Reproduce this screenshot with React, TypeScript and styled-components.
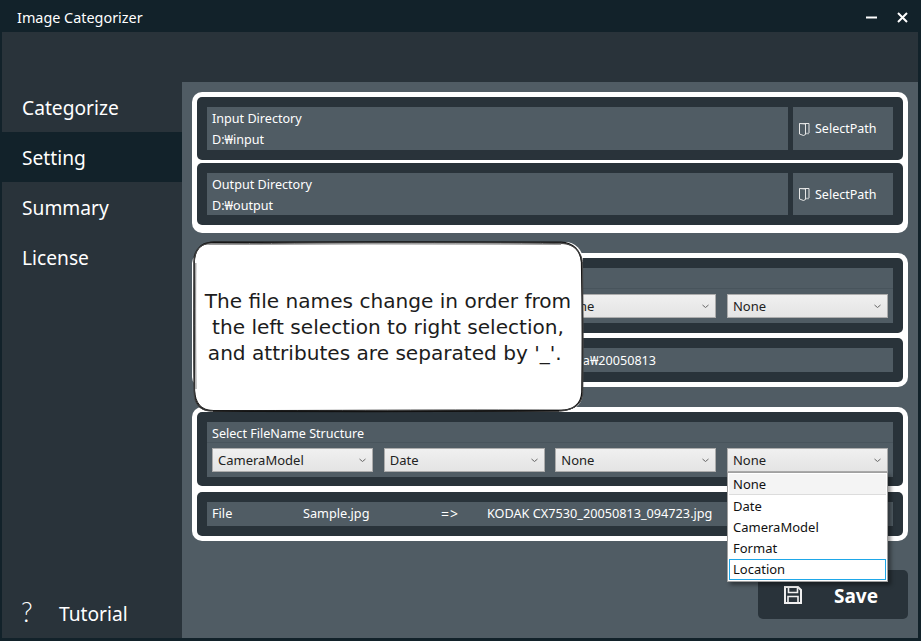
import styled, { createGlobalStyle } from 'styled-components';

const dark = '#12222a';
const card = '#29333a';
const panel = '#505c64';
const uiFont = '"Noto Sans", "Open Sans", sans-serif';

const GlobalStyle = createGlobalStyle`
  html, body {
    margin: 0;
    padding: 0;
    background: ${dark};
  }
  * {
    box-sizing: border-box;
  }
`;

const Window = styled.div`
  position: relative;
  display: flex;
  flex-direction: column;
  width: 921px;
  height: 641px;
  overflow: hidden;
  background: ${dark};
  color: #fff;
  font-family: ${uiFont};
`;

const TitleBar = styled.div`
  display: flex;
  align-items: center;
  justify-content: space-between;
  height: 32px;
  flex: none;
  padding: 0 13px 0 17px;
`;

const Title = styled.div`
  font-size: 14.4px;
  line-height: 18px;
  margin-top: 3px;
`;

const WindowButtons = styled.div`
  display: flex;
  align-items: center;
  gap: 20px;
  margin-top: 2px;
`;

const Body = styled.div`
  display: flex;
  flex: 1;
  margin: 0 3px 3px 2px;
  min-height: 0;
  background: ${card};
`;

const Sidebar = styled.nav`
  display: flex;
  flex-direction: column;
  width: 180px;
  flex: none;
  padding-top: 50px;
`;

const NavItem = styled.div<{ $active?: boolean }>`
  display: flex;
  align-items: center;
  height: 50px;
  padding-left: 20px;
  font-size: 19.2px;
  background: ${(p) => (p.$active ? dark : 'transparent')};
`;

const TutorialItem = styled.div`
  display: flex;
  align-items: center;
  height: 50px;
  margin-top: auto;
  padding-left: 19px;
  font-size: 19.2px;
`;

const Question = styled.span`
  width: 38px;
  font-family: Lato, sans-serif;
  font-weight: 300;
  font-size: 27px;
  margin-top: -3px;
`;

const Main = styled.main`
  display: flex;
  flex-direction: column;
  flex: 1;
  min-width: 0;
  margin-top: 50px;
  padding: 10px 10px 19px;
  background: ${panel};
`;

const Group = styled.section<{ $gap: number; $bottom: number }>`
  display: flex;
  flex-direction: column;
  gap: ${(p) => p.$gap}px;
  margin-bottom: 20px;
  padding: 5px 5px ${(p) => p.$bottom}px;
  background: #fff;
  border-radius: 10px;
`;

const Card = styled.div<{ $bottom?: number }>`
  display: flex;
  gap: 5px;
  padding: 10px 10px ${(p) => p.$bottom ?? 10}px;
  background: ${card};
  border-radius: 5px;
`;

const PathPanel = styled.div`
  display: flex;
  flex-direction: column;
  justify-content: space-between;
  flex: 1;
  height: 42.5px;
  padding: 3px 5px 0.5px;
  background: ${panel};
  font-size: 12.6px;
  line-height: 18px;
`;

const SelectButton = styled.button`
  display: flex;
  align-items: center;
  gap: 5px;
  width: 100px;
  height: 42.5px;
  padding: 0.6px 0 0 5px;
  border: none;
  background: ${panel};
  color: #fff;
  font-family: ${uiFont};
  font-size: 12.5px;
`;

const StructurePanel = styled.div`
  flex: 1;
  height: 55px;
  background: ${panel};
`;

const StructureLabel = styled.div`
  height: 21px;
  padding: 3px 5px 0;
  font-size: 12.6px;
  line-height: 18px;
  border-bottom: 1px solid #48545c;
`;

const ComboRow = styled.div`
  display: grid;
  grid-template-columns: repeat(4, 161px);
  gap: 10.67px;
  padding: 5px 5px 0;
`;

const Combo = styled.div`
  display: flex;
  align-items: center;
  justify-content: space-between;
  height: 24px;
  padding: 0 6px 0 5px;
  background: linear-gradient(#f0f0f0, #e4e4e4);
  border: 1px solid #acacac;
  color: #222;
  font-size: 13px;
`;

const ResultRow = styled.div`
  display: grid;
  grid-template-columns: 91px 138px 46px 1fr;
  align-items: center;
  flex: 1;
  height: 24px;
  padding: 0 5px 1px;
  background: ${panel};
  font-size: 12.7px;
  white-space: nowrap;
`;

const Arrow = styled.span`
  font-size: 14px;
  letter-spacing: 1px;
`;

const DirectoryRow = styled.div`
  display: flex;
  align-items: center;
  justify-content: flex-end;
  flex: 1;
  height: 24px;
  padding-right: 237px;
  background: ${panel};
  font-size: 12.6px;
  white-space: nowrap;
`;

const SaveButton = styled.button`
  display: flex;
  align-items: center;
  width: 150px;
  height: 49px;
  margin-top: auto;
  align-self: flex-end;
  padding: 0 0 0 25px;
  border: none;
  border-radius: 5px;
  background: ${card};
  color: #fff;
  font-family: ${uiFont};
  font-size: 19px;
  font-weight: 700;
`;

const SaveLabel = styled.span`
  margin-left: 31px;
  margin-top: 2px;
`;

const Hint = styled.div`
  position: absolute;
  left: 194px;
  top: 242px;
  display: flex;
  align-items: center;
  justify-content: center;
  width: 389px;
  height: 169px;
  background: #fff;
  border-radius: 18px;
  color: #1c1c1c;
  font-family: 'DejaVu Sans', sans-serif;
  font-size: 20.1px;
  line-height: 26px;
  text-align: center;
  white-space: nowrap;
`;

const HintBorder = styled.svg`
  position: absolute;
  left: -5px;
  top: -5px;
  width: 399px;
  height: 179px;
  pointer-events: none;
`;

const HintText = styled.div`
  position: relative;
  margin-top: 1px;
  margin-left: -1px;
`;

const DropList = styled.ul`
  position: absolute;
  left: 727px;
  top: 472px;
  width: 161px;
  margin: 0;
  padding: 1px;
  list-style: none;
  background: #fff;
  border: 1px solid #a0a0a0;
  box-shadow: 3px 3px 4px rgba(0, 0, 0, 0.4);
  color: #111;
  font-size: 13px;
`;

const DropItem = styled.li<{ $current?: boolean; $hover?: boolean }>`
  display: flex;
  align-items: center;
  height: 21.2px;
  padding-left: ${(p) => (p.$hover ? 3 : 4)}px;
  background: ${(p) => (p.$current ? '#f4f4f4' : '#fff')};
  border-bottom: ${(p) => (p.$current ? '1px solid #dcdcdc' : 'none')};
  border: ${(p) => (p.$hover ? '1px solid #1ea7e8' : undefined)};
`;

const MinimizeIcon = () => (
  <svg width="11" height="11" viewBox="0 0 11 11">
    <path d="M0 5.5h11" stroke="#fff" strokeWidth="2" />
  </svg>
);

const CloseIcon = () => (
  <svg width="11" height="11" viewBox="0 0 11 11">
    <path d="M1 1l9 9M10 1l-9 9" stroke="#fff" strokeWidth="2" />
  </svg>
);

const DoorIcon = () => (
  <svg width="12" height="14" viewBox="0 0 12 14" fill="none" stroke="#e6e6e6" strokeWidth="1">
    <path d="M1.5 1.5h9.500v9.500" />
    <path d="M8 11.500h3" stroke="#aab0b4" strokeWidth="1.500" />
    <path d="M1.500 1.500v10.500l4 1.500 2-1v-10.500z" fill={panel} />
  </svg>
);

const Chevron = () => (
  <svg width="7" height="5" viewBox="0 0 7 5" fill="none">
    <path d="M.5 1l3 2.500 3-2.500" stroke="#666" strokeWidth="1" />
  </svg>
);

const SaveIcon = () => (
  <svg width="20" height="20" viewBox="0 0 20 20" fill="none" stroke="#f0f0f0" strokeWidth="2">
    <path d="M2 2h13l3 3v13h-16z" />
    <path d="M5.500 2v5.500h9v-5.500M5 18v-6.500h10v6.500" strokeWidth="1.600" />
  </svg>
);

const SketchBorder = () => (
  <HintBorder viewBox="0 0 399 179" fill="none">
    <path d="M22 5.500C100 4.500 300 5 372 5.200c12 .5 20 8 20.500 20 .8 40 1 90 .3 130-.5 12-9 18-21 18.300-100 1-250 1-350 .2-11-.5-16-8-16.300-19-.6-45-.6-90-.2-130C5.500 13 12 6 22 5.500z" stroke="#111" strokeWidth="1.300" />
    <path d="M25 4.800c100 .6 250 .2 345 .7 14 1 22 7 23 24 1 40 .2 85 .5 125 0 12-7 19-24 18.800-100-.8-240 .4-345 .2-13 0-18-8-19-20-.8-40 .4-90-.5-130C4 12 15 5 25 4.800z" stroke="#222" strokeWidth="1" />
    <path d="M18 7c110-1 250-1.500 356-.4 11 .6 18 8 19.500 18 .4 45 1.200 90 .2 133-1 10-11 16-23 16.500-110 .8-240 .6-350 0-10-1-15-7-15.500-17-.8-45-.3-90 0-132C6 14 10 8 18 7z" stroke="#444" strokeWidth="1" />
    <path d="M20 7.500c110-.6 250-.8 352-.2M6.800 26c-.4 40-.2 90 .2 126" stroke="#999" strokeWidth="1.200" />
    <path d="M24 174c110 .8 240 .6 346-.3" stroke="#111" strokeWidth="1.500" />
  </HintBorder>
);

const StructureCombos = ({ values }: { values: string[] }) => (
  <ComboRow>
    {values.map((value, i) => (
      <Combo key={i}>
        <span>{value}</span>
        <Chevron />
      </Combo>
    ))}
  </ComboRow>
);

const PathCard = ({ label, value }: { label: string; value: string }) => (
  <Card>
    <PathPanel>
      <div>{label}</div>
      <div>{value}</div>
    </PathPanel>
    <SelectButton>
      <DoorIcon />
      SelectPath
    </SelectButton>
  </Card>
);

const App = () => {
  return (
    <Window>
      <GlobalStyle />
      <TitleBar>
        <Title>Image Categorizer</Title>
        <WindowButtons>
          <MinimizeIcon />
          <CloseIcon />
        </WindowButtons>
      </TitleBar>
      <Body>
        <Sidebar>
          <NavItem>Categorize</NavItem>
          <NavItem $active>Setting</NavItem>
          <NavItem>Summary</NavItem>
          <NavItem>License</NavItem>
          <TutorialItem>
            <Question>?</Question>
            Tutorial
          </TutorialItem>
        </Sidebar>
        <Main>
          <Group $gap={3.4} $bottom={8}>
            <PathCard label="Input Directory" value="D:₩input" />
            <PathCard label="Output Directory" value="D:₩output" />
          </Group>
          <Group $gap={5.400} $bottom={5}>
            <Card $bottom={9.300}>
              <StructurePanel>
                <StructureLabel />
                <StructureCombos values={['', '', 'None', 'None']} />
              </StructurePanel>
            </Card>
            <Card>
              <DirectoryRow>a₩20050813</DirectoryRow>
            </Card>
          </Group>
          <Group $gap={5.400} $bottom={5}>
            <Card $bottom={9.300}>
              <StructurePanel>
                <StructureLabel>Select FileName Structure</StructureLabel>
                <StructureCombos values={['CameraModel', 'Date', 'None', 'None']} />
              </StructurePanel>
            </Card>
            <Card>
              <ResultRow>
                <span>File</span>
                <span>Sample.jpg</span>
                <Arrow>=&gt;</Arrow>
                <span>KODAK CX7530_20050813_094723.jpg</span>
              </ResultRow>
            </Card>
          </Group>
          <SaveButton>
            <SaveIcon />
            <SaveLabel>Save</SaveLabel>
          </SaveButton>
        </Main>
      </Body>
      <Hint>
        <SketchBorder />
        <HintText>
          The file names change in order from
          <br />
          the left selection to right selection,
          <br />
          and attributes are separated by '_'.{'\u00A0'}
        </HintText>
      </Hint>
      <DropList>
        <DropItem $current>None</DropItem>
        <DropItem>Date</DropItem>
        <DropItem>CameraModel</DropItem>
        <DropItem>Format</DropItem>
        <DropItem $hover>Location</DropItem>
      </DropList>
    </Window>
  );
};

export default App;
